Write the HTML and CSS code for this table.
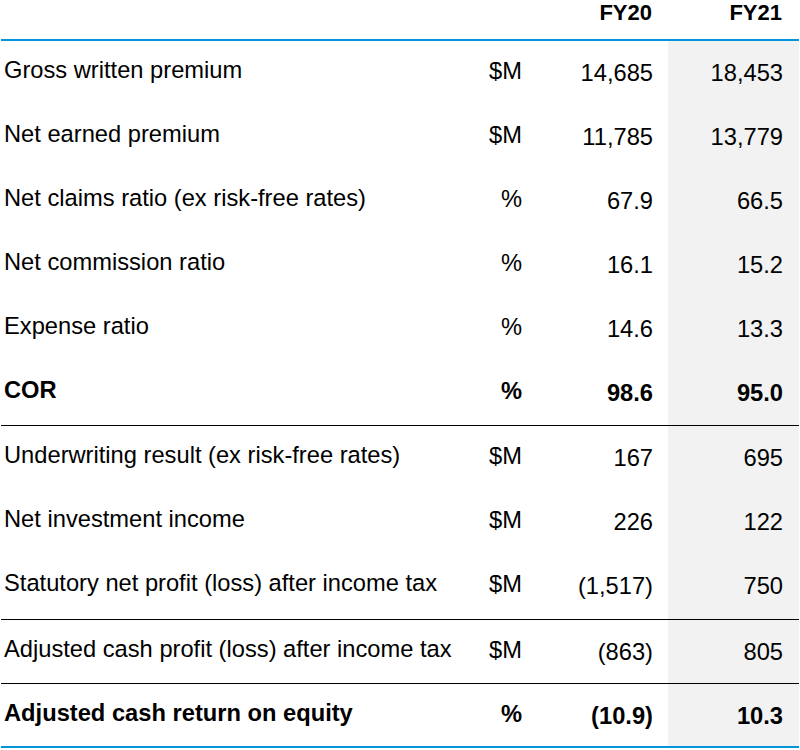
FILE: index.html
```html
<!DOCTYPE html>
<html lang="en">
<head>
<meta charset="utf-8">
<title>Financial summary</title>
<link rel="stylesheet" href="styles.css">
</head>
<body>
<div class="table">
  <div class="row head">
    <div class="cell label"></div>
    <div class="cell unit"></div>
    <div class="cell val">FY20</div>
    <div class="cell val fy21">FY21</div>
  </div>
  <div class="row">
    <div class="cell label">Gross written premium</div>
    <div class="cell unit">$M</div>
    <div class="cell val">14,685</div>
    <div class="cell val fy21">18,453</div>
  </div>
  <div class="row">
    <div class="cell label">Net earned premium</div>
    <div class="cell unit">$M</div>
    <div class="cell val">11,785</div>
    <div class="cell val fy21">13,779</div>
  </div>
  <div class="row">
    <div class="cell label">Net claims ratio (ex risk-free rates)</div>
    <div class="cell unit">%</div>
    <div class="cell val">67.9</div>
    <div class="cell val fy21">66.5</div>
  </div>
  <div class="row">
    <div class="cell label">Net commission ratio</div>
    <div class="cell unit">%</div>
    <div class="cell val">16.1</div>
    <div class="cell val fy21">15.2</div>
  </div>
  <div class="row">
    <div class="cell label">Expense ratio</div>
    <div class="cell unit">%</div>
    <div class="cell val">14.6</div>
    <div class="cell val fy21">13.3</div>
  </div>
  <div class="row bold rule rule-65">
    <div class="cell label">COR</div>
    <div class="cell unit">%</div>
    <div class="cell val">98.6</div>
    <div class="cell val fy21">95.0</div>
  </div>
  <div class="row">
    <div class="cell label">Underwriting result (ex risk-free rates)</div>
    <div class="cell unit">$M</div>
    <div class="cell val">167</div>
    <div class="cell val fy21">695</div>
  </div>
  <div class="row">
    <div class="cell label">Net investment income</div>
    <div class="cell unit">$M</div>
    <div class="cell val">226</div>
    <div class="cell val fy21">122</div>
  </div>
  <div class="row rule rule-66">
    <div class="cell label">Statutory net profit (loss) after income tax</div>
    <div class="cell unit">$M</div>
    <div class="cell val">(1,517)</div>
    <div class="cell val fy21">750</div>
  </div>
  <div class="row rule">
    <div class="cell label">Adjusted cash profit (loss) after income tax</div>
    <div class="cell unit">$M</div>
    <div class="cell val">(863)</div>
    <div class="cell val fy21">805</div>
  </div>
  <div class="row bold last">
    <div class="cell label">Adjusted cash return on equity</div>
    <div class="cell unit">%</div>
    <div class="cell val">(10.9)</div>
    <div class="cell val fy21">10.3</div>
  </div>
</div>
</body>
</html>
```

FILE: styles.css
```css
html, body {
  margin: 0;
  padding: 0;
  background: #ffffff;
}

body {
  font-family: "Liberation Sans", Arial, sans-serif;
  color: #000000;
}

.table {
  width: 798px;
  margin-left: 1px;
}

.row {
  display: grid;
  grid-template-columns: 469px 67px 131px 131px;
  height: 64px;
  box-sizing: border-box;
  font-size: 23.7px;
  line-height: 24px;
}

.cell {
  box-sizing: border-box;
  white-space: nowrap;
}

.label {
  padding: 17px 0 0 3px;
}

.unit {
  padding: 18px 15px 0 0;
  text-align: right;
}

.val {
  padding: 20px 15px 0 0;
  text-align: right;
}

.val.fy21 {
  padding-right: 16px;
  background: #f2f2f2;
}

.head {
  height: 41px;
  border-bottom: 2px solid #0096d9;
  font-size: 22px;
  font-weight: bold;
  line-height: 25px;
}

.head .cell {
  padding-top: 0;
}

.head .val {
  padding-right: 16px;
}

.head .val.fy21 {
  background: transparent;
  padding-right: 17px;
}

.bold {
  font-weight: bold;
}

.rule {
  border-bottom: 1px solid #000000;
}

.rule-65 {
  height: 65px;
}

.rule-66 {
  height: 66px;
}

.last {
  border-bottom: 2px solid #0096d9;
}
```
